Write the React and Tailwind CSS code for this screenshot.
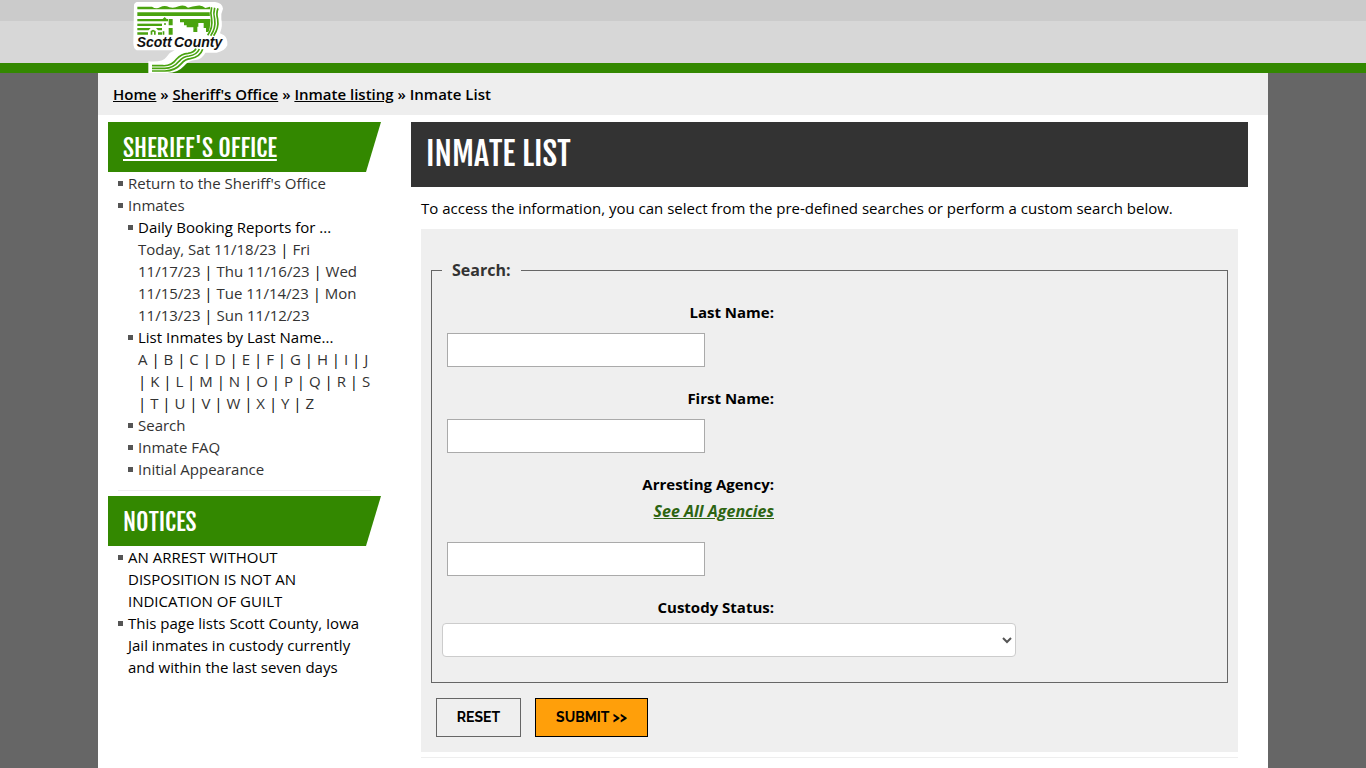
import React from "react";

const days = [
  "Today, Sat 11/18/23",
  "Fri 11/17/23",
  "Thu 11/16/23",
  "Wed 11/15/23",
  "Tue 11/14/23",
  "Mon 11/13/23",
  "Sun 11/12/23",
];
const letters = "ABCDEFGHIJKLMNOPQRSTUVWXYZ".split("");

function Logo() {
  return (
    <svg viewBox="0 0 360 240" className="h-20 w-[120px]" role="img" aria-label="Scott County">
      <path
        d="M50 6 L285 6 Q307 8 309 26 Q302 40 304 58 Q309 76 300 100 L312 106 Q324 116 322 136 Q314 154 290 158 L256 158 Q248 176 226 180 Q206 182 192 198 Q172 220 140 219 L85 219 L85 184 Q128 188 140 170 Q150 156 164 151 L50 151 Q40 146 40 128 L42 14 Q44 8 50 6 Z"
        fill="#fff"
      />
      <g fill="#4aa30f">
        <path d="M52 20 L96 20 Q108 28 120 22 Q134 14 148 22 Q162 26 176 19 Q192 13 204 23 Q218 18 232 17 Q246 14 256 24 L270 20 L272 28 L52 28 Z" />
        <path d="M52 37 H272 V48 H52 Z" />
        <path d="M52 57 H128 L134 51 L140 57 H144 V64 H52 Z" />
        <path d="M52 71 H126 V78 H52 Z" />
        <path d="M52 84 H92 L86 91 H52 Z M108 84 H126 V91 H114 Z" />
        <path d="M52 97 H84 V104 H52 Z M92 104 V93 L99 89 L107 93 V104 H102 V95 H97 V104 Z M114 97 H126 V104 H114 Z" />
        <path d="M146 57 H158 V76 H146 Z M146 84 H158 V104 H146 Z M132 70 H138 V74 H132 Z M128 94 H133 V104 H128 Z" />
        <path d="M180 57 H272 L268 96 H258 V84 H251 V69 H235 V80 H232 V96 H220 V82 H200 V76 H192 V67 H180 Z" />
      </g>
      <path d="M284 22 Q278 40 284 60 Q288 82 272 108" fill="none" stroke="#fff" strokeWidth="24" />
      <g fill="none" stroke="#4aa30f" strokeWidth="5">
        <path d="M275 22 Q270 40 275 58 Q279 82 263 106" />
        <path d="M284 23 Q279 40 284 58 Q288 84 272 107" />
        <path d="M294 25 Q288 40 293 58 Q297 84 281 107" />
        <path d="M228 146 Q222 158 204 160 Q184 161 170 177 Q154 199 128 197 H96" />
        <path d="M238 147 Q230 165 207 168 Q190 169 177 184 Q158 207 130 205 H96" />
        <path d="M248 148 Q240 172 211 176 Q196 177 184 191 Q164 214 132 213 H96" />
      </g>
      <g
        fontFamily="Liberation Sans, sans-serif"
        fontSize="42"
        fontWeight="700"
        fontStyle="italic"
        fill="#111"
        stroke="#fff"
        strokeWidth="3"
        paintOrder="stroke"
      >
        <text x="50" y="140">Scott</text>
        <text x="162" y="140">County</text>
      </g>
    </svg>
  );
}

function Item({ children }) {
  return (
    <li className="flex">
      <span className="mt-[9px] mr-[5px] size-[5px] shrink-0 bg-[#555]" />
      <div className="min-w-0 flex-1">{children}</div>
    </li>
  );
}

function PipeLinks({ items }) {
  return items.map((t, i) => (
    <React.Fragment key={t}>
      {i > 0 && " | "}
      <a href="#" className="text-[#333]">{t}</a>
    </React.Fragment>
  ));
}

function SideHeading({ children }) {
  return (
    <h2 className="flex h-[50px] items-center bg-[#338800] px-[15px] pt-0.5 font-['Fjalla_One','Roboto_Condensed',sans-serif] text-2xl leading-8 font-normal text-white uppercase [font-kerning:none] [clip-path:polygon(0_0,100%_0,calc(100%_-_15px)_100%,0_100%)]">
      {children}
    </h2>
  );
}

function TextField({ id, label, extra }) {
  return (
    <div className="mb-[18px]">
      <div className="w-[332px] text-right leading-[27px] font-bold">
        <label htmlFor={id}>{label}</label>
        {extra}
      </div>
      <input
        id={id}
        type="text"
        className={
          "ml-[5px] block h-[34px] w-[258px] border border-[#aaa] bg-white px-2 " +
          (extra ? "mt-[17px]" : "mt-[7px]")
        }
      />
    </div>
  );
}

export default function App() {
  return (
    <div className="min-h-screen bg-[#666] font-['Open_Sans',sans-serif] text-[15px] leading-[22px] text-black">
      <header className="relative">
        <div className="h-[21px] bg-[#cbcbcb]" />
        <div className="h-[42px] bg-[#d7d7d7]" />
        <div className="h-[10px] bg-[#338800]" />
        <div className="absolute inset-x-0 top-0">
          <div className="mx-auto max-w-[1170px] px-[22px]">
            <a href="#" className="inline-block"><Logo /></a>
          </div>
        </div>
      </header>

      <div className="mx-auto min-h-[695px] max-w-[1170px] bg-white">
        <nav className="bg-[#eee] px-[15px] py-[10px] font-semibold">
          <a href="#" className="underline">Home</a> » <a href="#" className="underline">Sheriff's Office</a> »{" "}
          <a href="#" className="underline">Inmate listing</a> » Inmate List
        </nav>

        <div className="flex gap-[30px] pt-[7px] pr-5 pl-[10px]">
          <aside className="w-[273px] shrink-0">
            <SideHeading><a href="#" className="underline decoration-2 underline-offset-2">Sheriff's Office</a></SideHeading>
            <ul className="mx-[10px] border-b border-[#eee] pb-[10px]">
              <Item><a href="#" className="text-[#333]">Return to the Sheriff's Office</a></Item>
              <Item>
                <a href="#" className="text-[#333]">Inmates</a>
                <ul>
                  <Item>Daily Booking Reports for ...<br /><PipeLinks items={days} /></Item>
                  <Item>List Inmates by Last Name...<br /><PipeLinks items={letters} /></Item>
                  <Item><a href="#" className="text-[#333]">Search</a></Item>
                  <Item><a href="#" className="text-[#333]">Inmate FAQ</a></Item>
                  <Item><a href="#" className="text-[#333]">Initial Appearance</a></Item>
                </ul>
              </Item>
            </ul>
            <div className="mt-[5px]">
              <SideHeading>Notices</SideHeading>
            </div>
            <ul className="mx-[10px]">
              <Item>AN ARREST WITHOUT DISPOSITION IS NOT AN INDICATION OF GUILT</Item>
              <Item>This page lists Scott County, Iowa Jail inmates in custody currently and within the last seven days</Item>
            </ul>
          </aside>

          <main className="min-w-0 flex-1">
            <h1 className="flex h-[65px] items-center bg-[#333] px-[15px] pb-0.5 font-['Fjalla_One','Roboto_Condensed',sans-serif] text-[32px] leading-10 font-normal text-white uppercase [font-kerning:none]">
              Inmate List
            </h1>
            <div className="px-[10px] pt-[10px]">
              <p>
                To access the information, you can select from the pre-defined searches or perform a custom search below.
              </p>
              <form className="mt-[10px] bg-[#efefef] px-[10px] pt-[30px] pb-[15px]">
                <fieldset className="border border-[#666] px-[10px] pb-[25px]">
                  <legend className="px-[10px] text-base leading-[22px] font-bold text-[#333]">Search:</legend>
                  <div className="pt-[18px]">
                    <TextField id="last" label="Last Name:" />
                    <TextField id="first" label="First Name:" />
                    <TextField
                      id="agency"
                      label="Arresting Agency:"
                      extra={<a href="#" className="block text-base leading-[27px] text-[#2d6512] italic underline">See All Agencies</a>}
                    />
                    <div className="w-[332px] text-right leading-[27px] font-bold">
                      <label htmlFor="custody">Custody Status:</label>
                    </div>
                    <select id="custody" className="mt-0.5 block h-[34px] w-[574px] max-w-full rounded border border-[#ccc] bg-white text-[#555]">
                      <option></option>
                    </select>
                  </div>
                </fieldset>
                <div className="mt-[15px] flex gap-[14px] pl-[5px] font-[Raleway,Lato,sans-serif] text-sm font-bold">
                  <button type="reset" className="h-[39px] w-[85px] border border-[#666] pb-0.5">RESET</button>
                  <button type="submit" className="h-[39px] w-[113px] border border-black bg-[#ff9f0a] pb-0.5">SUBMIT &gt;&gt;</button>
                </div>
              </form>
              <hr className="mt-[5px] border-[#eee]" />
            </div>
          </main>
        </div>
      </div>
    </div>
  );
}
